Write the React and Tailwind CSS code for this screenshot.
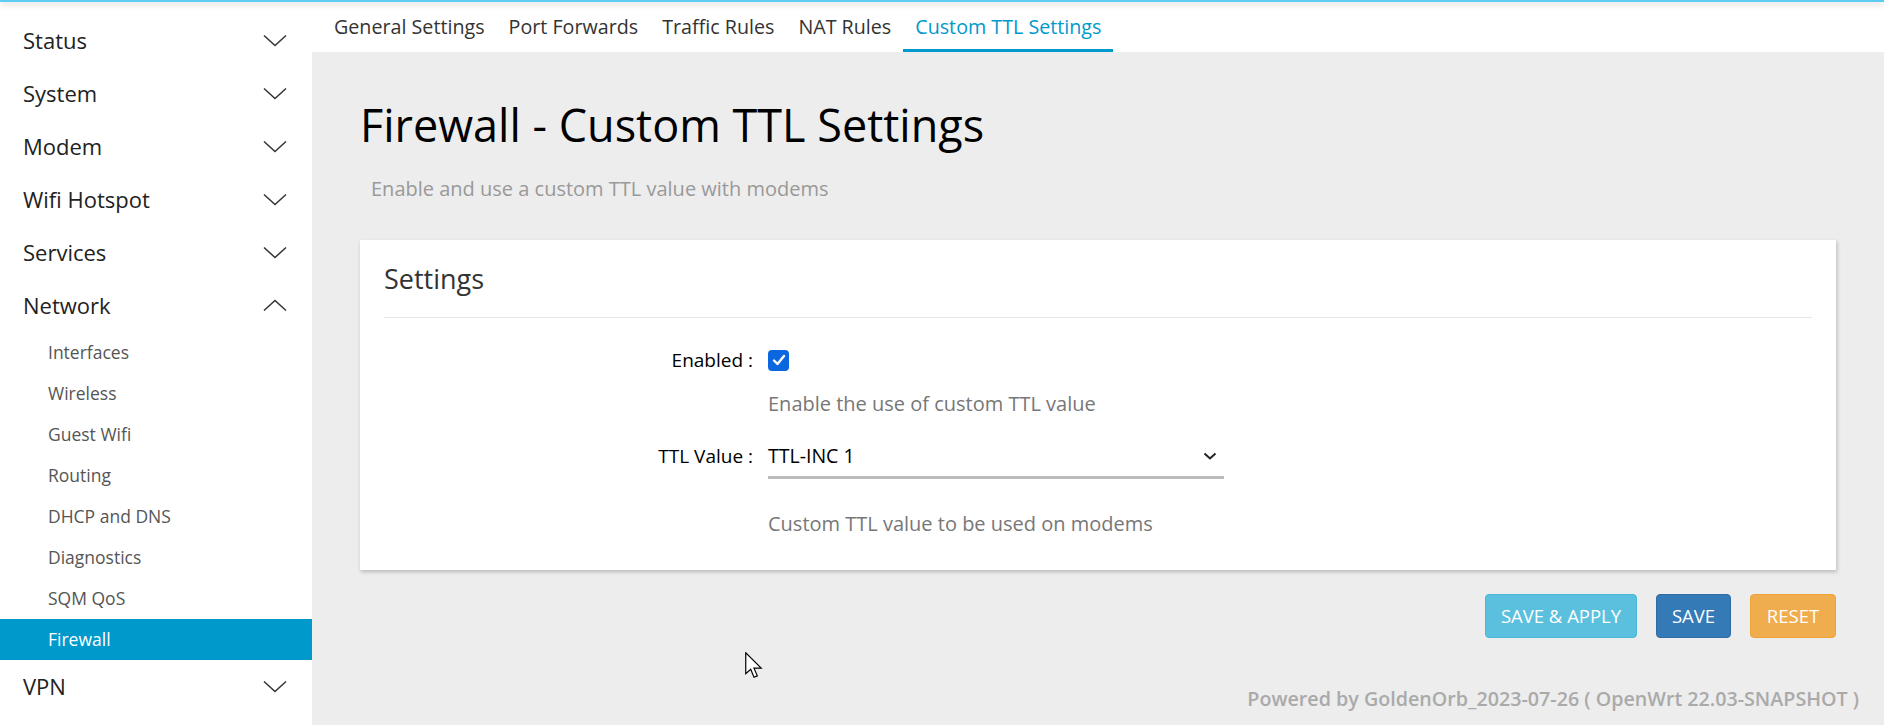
import React from 'react';

const Chevron = ({ up }) => (
  <svg width="24" height="13" viewBox="0 0 24 13" fill="none">
    {up ? (
      <polyline points="1,11.5 12,1.5 23,11.5" stroke="#333" strokeWidth="1.5" />
    ) : (
      <polyline points="1,1.5 12,11.5 23,1.5" stroke="#333" strokeWidth="1.5" />
    )}
  </svg>
);

const topItems = ['Status', 'System', 'Modem', 'Wifi Hotspot', 'Services'];
const subItems = ['Interfaces', 'Wireless', 'Guest Wifi', 'Routing', 'DHCP and DNS', 'Diagnostics', 'SQM QoS', 'Firewall'];
const tabs = ['General Settings', 'Port Forwards', 'Traffic Rules', 'NAT Rules', 'Custom TTL Settings'];

const TopItem = ({ label, up }) => (
  <div className="h-[53px] flex items-center justify-between pl-[23px] pr-[25px] pb-[1px] text-[22px] text-[#222]">
    <span>{label}</span>
    <Chevron up={up} />
  </div>
);

export default function App() {
  return (
    <div className="w-[1884px] h-[725px] overflow-hidden bg-[#ededed] relative flex flex-col font-['Open_Sans',sans-serif]">
      <div className="h-[2px] shrink-0 bg-[#5ccdf0] shadow-[0_2px_6px_rgba(0,0,0,0.25)] relative z-10" />
      <div className="flex flex-1 min-h-0">
        {/* sidebar */}
        <aside className="w-[312px] shrink-0 bg-white pt-[12px]">
          {topItems.map((t) => (
            <TopItem key={t} label={t} />
          ))}
          <TopItem label="Network" up />
          {subItems.map((s) => (
            <div
              key={s}
              className={
                s === 'Firewall'
                  ? 'h-[41px] flex items-center pl-[48px] text-[17.5px] bg-[#0099cc] text-white'
                  : 'h-[41px] flex items-center pl-[48px] text-[17.5px] text-[#555]'
              }
            >
              {s}
            </div>
          ))}
          <TopItem label="VPN" />
        </aside>

        {/* main */}
        <main className="flex-1 flex flex-col">
          <nav className="h-[50px] shrink-0 bg-white flex pl-[10px]">
            {tabs.map((t, i) => (
              <div
                key={t}
                className={
                  i === tabs.length - 1
                    ? 'px-[12px] pt-[3px] flex items-center border-b-[3px] border-[#0099cc] text-[#0099cc] text-[19.7px]'
                    : 'px-[12px] pt-[3px] flex items-center border-b-[3px] border-transparent text-[#333] text-[19.7px]'
                }
              >
                {t}
              </div>
            ))}
          </nav>

          <div className="px-[48px] pt-[47px]">
            <h1 className="text-[45px] leading-[52px] text-black">Firewall - Custom TTL Settings</h1>
            <p className="mt-[24px] pl-[11px] text-[20px] leading-[28px] text-[#999]">
              Enable and use a custom TTL value with modems
            </p>

            <div className="mt-[37px] bg-white px-[24px] pt-[21px] pb-[32px] shadow-[1px_2px_4px_rgba(0,0,0,0.22)]">
              <h3 className="text-[27px] leading-[36px] text-[#333] pb-[20px] border-b border-[#e6e6e6]">Settings</h3>

              <div className="mt-[27px] flex items-center h-[30px] gap-[15px]">
                <label className="w-[369px] text-right text-[19px] text-black">Enabled :</label>
                <div className="w-[21px] h-[21px] rounded-[4px] bg-[#0b67e0] flex items-center justify-center">
                  <svg width="14" height="12" viewBox="0 0 14 12" fill="none">
                    <polyline points="2,6.5 5.5,10 12,2" stroke="white" strokeWidth="2.4" strokeLinecap="round" strokeLinejoin="round" />
                  </svg>
                </div>
              </div>
              <p className="ml-[384px] mt-[15px] text-[20px] leading-[28px] text-[#777]">Enable the use of custom TTL value</p>

              <div className="mt-[21px] flex items-center h-[40px] gap-[15px]">
                <label className="w-[369px] text-right text-[19px] text-black pb-[5px]">TTL Value :</label>
                <div className="w-[456px] h-[40px] border-b-[3px] border-[#bbbbbb] flex items-center justify-between pb-[3px] pr-[7px] text-[19.5px] text-black">
                  <span>TTL-INC 1</span>
                  <svg width="14" height="8" viewBox="0 0 14 8" fill="none">
                    <polyline points="1.5,1.5 7,6.5 12.5,1.5" stroke="#222" strokeWidth="2" />
                  </svg>
                </div>
              </div>
              <p className="ml-[384px] mt-[31px] text-[20px] leading-[28px] text-[#777]">Custom TTL value to be used on modems</p>
            </div>

            <div className="mt-[24px] flex justify-end gap-[19px]">
              <button className="w-[152px] h-[44px] rounded-[4px] bg-[#5bc0de] border border-[#46b8da] text-white text-[18.5px]">
                SAVE &amp; APPLY
              </button>
              <button className="w-[75px] h-[44px] rounded-[4px] bg-[#337ab7] border border-[#2e6da4] text-white text-[18.5px]">
                SAVE
              </button>
              <button className="w-[86px] h-[44px] rounded-[4px] bg-[#f0ad4e] border border-[#eea236] text-white text-[18.5px]">
                RESET
              </button>
            </div>
          </div>

          <div className="mt-[49px] pr-[25px] text-right text-[19.7px] leading-[24px] font-semibold text-[#aaaaaa]">
            Powered by GoldenOrb_2023-07-26 ( OpenWrt 22.03-SNAPSHOT )
          </div>
        </main>
      </div>

      {/* mouse cursor */}
      <svg className="absolute left-[745px] top-[652px]" width="18" height="27" viewBox="0 0 12 18" fill="none">
        <path d="M0.5 0.5 L0.5 14.5 L3.8 11.5 L6 16.8 L8.2 15.9 L6 10.8 L10.8 10.8 Z" fill="white" stroke="black" strokeWidth="0.8" strokeLinejoin="miter" />
      </svg>
    </div>
  );
}
